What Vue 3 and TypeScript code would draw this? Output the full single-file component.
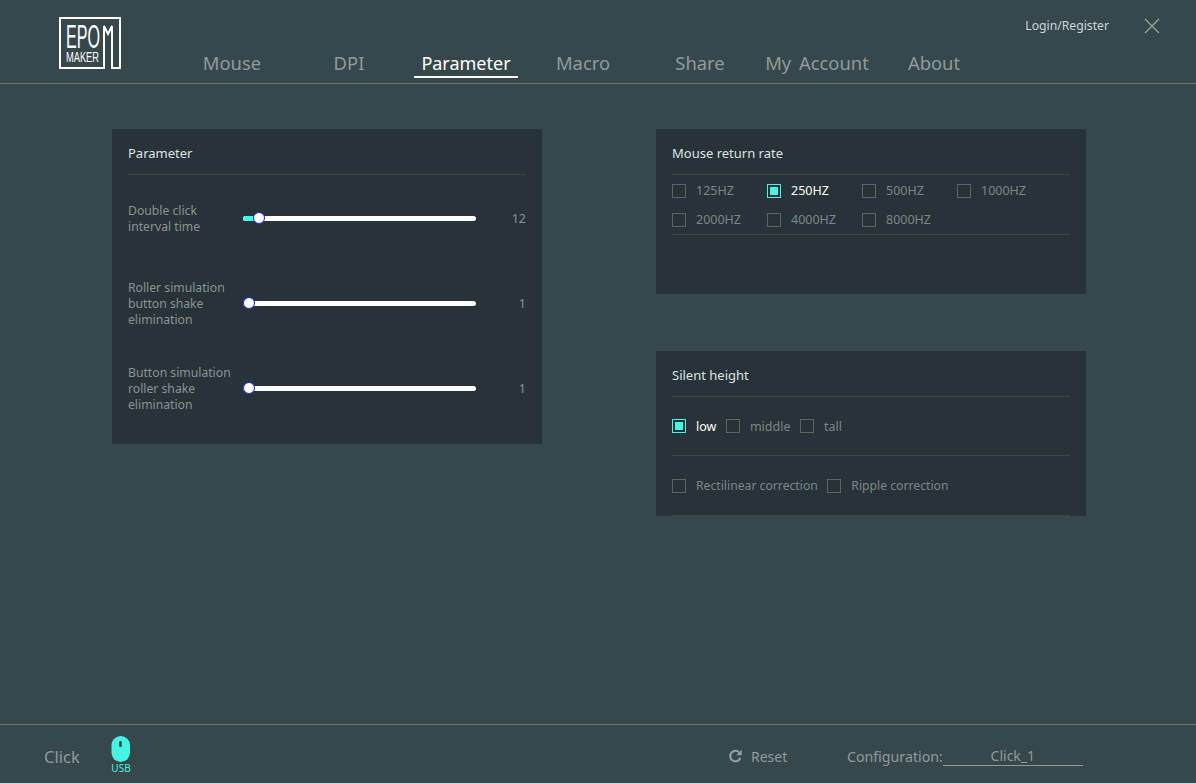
<script setup lang="ts">
const tabs = ['Mouse', 'DPI', 'Parameter', 'Macro', 'Share', 'My Account', 'About']
const sliders = [
  { label: ['Double click', 'interval time'], value: 12, pct: 4.3 },
  { label: ['Roller simulation', 'button shake', 'elimination'], value: 1, pct: 0 },
  { label: ['Button simulation', 'roller shake', 'elimination'], value: 1, pct: 0 },
]
const rates = [
  { t: '125HZ', on: false }, { t: '250HZ', on: true }, { t: '500HZ', on: false }, { t: '1000HZ', on: false },
  { t: '2000HZ', on: false }, { t: '4000HZ', on: false }, { t: '8000HZ', on: false },
]
const heights = [{ t: 'low', on: true }, { t: 'middle', on: false }, { t: 'tall', on: false }]
const corrections = [{ t: 'Rectilinear correction', on: false }, { t: 'Ripple correction', on: false }]
</script>

<template>
  <div class="app">
    <header class="top">
      <div class="logo">
        <svg width="62" height="52" viewBox="0 0 62 52">
          <path d="M1 1H61V51H53V9L49 17L45 9V51H1Z" fill="none" stroke="#fff" stroke-width="2" />
          <text x="7" y="31" class="logo-big" textLength="34" lengthAdjust="spacingAndGlyphs">EPO</text>
          <text x="7" y="44.5" class="logo-small" textLength="33" lengthAdjust="spacingAndGlyphs">MAKER</text>
        </svg>
      </div>
      <nav class="tabs">
        <span v-for="t in tabs" :key="t" class="tab" :class="{ active: t === 'Parameter' }">{{ t }}</span>
      </nav>
      <div class="account">
        <span class="login">Login/Register</span>
        <svg class="close" width="16" height="16" viewBox="0 0 16 16">
          <path d="M1 1L15 15M15 1L1 15" stroke="#9aa3a5" stroke-width="1.3" fill="none" />
        </svg>
      </div>
    </header>

    <main class="main">
      <section class="panel left">
        <h2 class="title">Parameter</h2>
        <div class="sliders">
          <div v-for="(s, i) in sliders" :key="i" class="slider-row">
            <div class="slider-label">
              <div v-for="l in s.label" :key="l">{{ l }}</div>
            </div>
            <div class="track">
              <div class="fill" :style="{ width: `calc(${s.pct}% + 6px)` }"></div>
              <div class="thumb" :style="{ left: s.pct + '%' }"></div>
            </div>
            <div class="value">{{ s.value }}</div>
          </div>
        </div>
      </section>

      <div class="right">
        <section class="panel rate">
          <h2 class="title">Mouse return rate</h2>
          <div class="rate-grid">
            <label v-for="r in rates" :key="r.t" class="check" :class="{ on: r.on }">
              <i class="box"></i><span>{{ r.t }}</span>
            </label>
          </div>
        </section>
        <section class="panel silent">
          <h2 class="title">Silent height</h2>
          <div class="opt-row first">
            <label v-for="r in heights" :key="r.t" class="check" :class="{ on: r.on }">
              <i class="box"></i><span>{{ r.t }}</span>
            </label>
          </div>
          <div class="opt-row second">
            <label v-for="r in corrections" :key="r.t" class="check">
              <i class="box"></i><span>{{ r.t }}</span>
            </label>
          </div>
        </section>
      </div>
    </main>

    <footer class="bottom">
      <span class="mode">Click</span>
      <div class="usb">
        <svg width="20" height="26" viewBox="0 0 20 26">
          <rect x="0.5" y="0" width="18.5" height="26" rx="9.2" fill="#45f5e4" />
          <rect x="8.2" y="5" width="2.6" height="6" rx="1" fill="#33474c" />
        </svg>
        <span>USB</span>
      </div>
      <div class="reset">
        <svg width="15" height="15" viewBox="0 0 16 16">
          <path d="M13.2 9.5A5.6 5.6 0 1 1 11.9 3.6" fill="none" stroke="#93a0a3" stroke-width="2.2" />
          <path d="M14.6 0.8V6.6H8.8Z" fill="#93a0a3" />
        </svg>
        <span>Reset</span>
      </div>
      <div class="config">
        <span class="config-label">Configuration:</span>
        <span class="config-name">Click_1</span>
      </div>
    </footer>
  </div>
</template>

<style>
html, body { margin: 0; background: #37484d; }
</style>

<style scoped>
.app {
  width: 1196px;
  height: 783px;
  background: #37484d;
  display: flex;
  flex-direction: column;
  font-family: "Noto Sans", "Noto Sans CJK SC", sans-serif;
  overflow: hidden;
}
.top {
  height: 83px;
  flex: none;
  border-bottom: 1px solid #6b7678;
  display: flex;
  position: relative;
}
.logo {
  width: 114px;
  padding: 17px 0 0 59px;
  flex: none;
  line-height: 0;
}
.logo svg { overflow: visible; }
.logo-big { font: 400 33px "Liberation Sans", sans-serif; fill: #fff; }
.logo-small { font: 400 15px "Liberation Sans", sans-serif; fill: #fff; }
.tabs {
  display: grid;
  grid-template-columns: repeat(7, 117px);
  align-items: start;
  padding-top: 50px;
  margin-left: 0.5px;
}
.tab {
  justify-self: center;
  font-size: 18.4px;
  line-height: 26px;
  color: #8f9a9c;
  white-space: nowrap;
  word-spacing: 3px;
}
.tab.active {
  color: #fff;
  font-size: 18px;
  width: 104px;
  text-align: center;
  height: 26px;
  border-bottom: 2px solid #fff;
}
.account {
  position: absolute;
  top: 17px;
  right: 36px;
  display: flex;
  align-items: center;
  gap: 35px;
}
.login { font-size: 12.2px; line-height: 17px; color: #c9d6da; }
.close { display: block; }
.main {
  flex: 1;
  display: flex;
  align-items: flex-start;
  gap: 114px;
  padding: 45px 0 0 112px;
}
.panel {
  width: 430px;
  box-sizing: border-box;
  background: #273338;
  padding: 0 16px;
}
.title {
  margin: 0;
  height: 45px;
  font-size: 13px;
  font-weight: 400;
  line-height: 48px;
  color: #dde2e3;
  border-bottom: 1px solid #3a4646;
}
.left { height: 315px; }
.sliders { padding-top: 19px; }
.slider-row {
  display: flex;
  align-items: center;
  height: 48px;
  margin-bottom: 37px;
}
.slider-label {
  width: 115px;
  flex: none;
  font-size: 12.2px;
  line-height: 16px;
  color: #8a9294;
  white-space: nowrap;
  padding-top: 2px;
}
.track {
  position: relative;
  width: 233px;
  height: 5px;
  border-radius: 3px;
  background: #fff;
  flex: none;
}
.fill {
  height: 100%;
  background: #45f5e4;
  border-radius: 3px 0 0 3px;
}
.thumb {
  position: absolute;
  top: 50%;
  width: 12px;
  height: 12px;
  box-sizing: border-box;
  margin: -6px 0 0 0;
  background: #fff;
  border: 1.5px solid #1a22e0;
  border-radius: 50%;
}
.slider-row .value {
  flex: 1;
  text-align: right;
  font-size: 12.5px;
  color: #8a9294;
}
.right {
  display: flex;
  flex-direction: column;
  gap: 57px;
}
.rate { height: 165px; }
.rate-grid {
  display: grid;
  grid-template-columns: repeat(4, 95px);
  grid-auto-rows: 29px;
  height: 58px;
  padding-top: 1px;
  border-bottom: 1px solid #3a4646;
}
.check {
  display: flex;
  align-items: center;
  gap: 10px;
  font-size: 12.5px;
  color: #7d8588;
  white-space: nowrap;
}
.box {
  width: 14px;
  height: 14px;
  box-sizing: border-box;
  border: 1px solid #5c6466;
  flex: none;
  display: block;
}
.check.on { color: #fff; }
.check.on .box {
  border-color: #45f5e4;
  background: #45f5e4;
  box-shadow: inset 0 0 0 2px #273338;
}
.silent { height: 165px; }
.opt-row {
  display: flex;
  gap: 9.5px;
  height: 58px;
  border-bottom: 1px solid #3a4646;
  align-items: center;
}
.opt-row.second { height: 59px; }
.opt-row.second .check { font-size: 12.2px; }
.bottom {
  height: 54px;
  padding-top: 4px;
  flex: none;
  border-top: 1px solid #6b7678;
  display: flex;
  align-items: center;
  color: #8f9a9c;
  font-size: 14px;
}
.mode {
  margin-left: 44px;
  width: 66px;
  font-size: 16.6px;
  color: #8f9a9c;
}
.usb {
  display: flex;
  flex-direction: column;
  align-items: center;
  width: 22px;
  margin-top: -2px;
  color: #45f5e4;
  font-size: 10px;
  line-height: 12px;
}
.usb svg { display: block; }
.reset {
  margin-left: 596px;
  display: flex;
  align-items: center;
  gap: 8px;
  width: 119px;
}
.config { display: flex; align-items: center; }
.config-label { font-size: 14.2px; }
.config-name {
  width: 140px;
  text-align: center;
  border-bottom: 1px solid #8f9a9c;
  height: 17px;
  line-height: 15px;
  margin-top: 1px;
}
</style>
